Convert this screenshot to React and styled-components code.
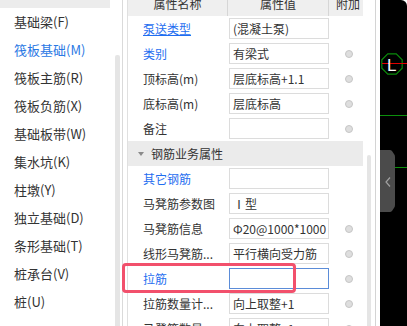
import React from 'react';
import styled, { createGlobalStyle } from 'styled-components';

const Global = createGlobalStyle`
  html, body { margin: 0; padding: 0; background: #fff; }
  body { font-family: "Noto Sans CJK SC", "Noto Sans", sans-serif; }
`;

const Root = styled.div`
  display: flex;
  width: 407px;
  height: 326px;
  overflow: hidden;
  background: #fff;
`;

/* ---------- left list ---------- */
const LeftPanel = styled.div`
  flex: none;
  width: 123px;
  box-sizing: border-box;
  display: flex;
  padding-right: 2px;
  border-right: 1px solid #dadada;
`;
const List = styled.div`
  flex: 1;
  display: flex;
  flex-direction: column;
  min-width: 0;
`;
const ListTop = styled.div`
  height: 8px;
  margin-right: 5px;
  background: #ececec;
`;
const ListItem = styled.div`
  height: 28px;
  line-height: 28px;
  padding-left: 14px;
  font-size: 13px;
  white-space: nowrap;
  color: ${p => (p.$active ? '#2a78e4' : '#333')};
`;
const VScroll = styled.div`
  flex: none;
  width: ${p => p.$w}px;
  display: flex;
  flex-direction: column;
  padding-top: ${p => p.$top}px;
  padding-left: ${p => p.$pl || 0}px;
  padding-right: ${p => p.$pr || 0}px;
  box-sizing: border-box;
`;
const Thumb = styled.div`
  flex: 1;
  background: #e5e5e5;
  border-radius: 2px 2px 0 0;
`;

/* ---------- property panel ---------- */
const PropPanel = styled.div`
  flex: none;
  width: 249px;
  box-sizing: border-box;
  margin-left: 4px;
  display: flex;
  border-left: 1px solid #e0e0e0;
  border-right: 1px solid #d4d4d4;
`;
const Table = styled.div`
  flex: none;
  width: 235px;
  display: flex;
  flex-direction: column;
`;
const cols = '100px 101px 34px';
const Header = styled.div`
  display: grid;
  grid-template-columns: ${cols};
  height: 16px;
  background: #efefef;
  flex: none;
`;
const HeadCell = styled.div`
  box-sizing: border-box;
  font-size: 12px;
  line-height: 8px;
  color: #333;
  text-align: center;
  padding-left: ${p => p.$pl || 0}px;
  border-right: ${p => (p.$last ? 'none' : '1px solid #d6d6d6')};
`;
const Row = styled.div`
  position: relative;
  display: grid;
  grid-template-columns: ${cols};
  height: 25px;
  align-items: center;
  flex: none;
`;
const NameCell = styled.div`
  padding-left: 15px;
  font-size: 12px;
  white-space: nowrap;
  overflow: hidden;
  color: ${p => (p.$link ? '#1f6ef0' : '#333')};
  text-decoration: ${p => (p.$underline ? 'underline' : 'none')};
`;
const ValueBox = styled.div`
  margin-left: 1px;
  height: 21px;
  box-sizing: border-box;
  border: 1px solid ${p => (p.$focus ? '#5b8cd8' : '#dcdcdc')};
  padding-left: 3px;
  font-size: 12px;
  line-height: 19px;
  color: #333;
  white-space: nowrap;
  overflow: hidden;
`;
const AttachCell = styled.div`
  display: flex;
  justify-content: center;
  padding-left: 6px;
`;
const Radio = styled.span`
  width: 8px;
  height: 8px;
  box-sizing: border-box;
  border-radius: 50%;
  background: #dedede;
  border: 1px solid #c6c6c6;
`;
const GroupRow = styled.div`
  height: 25px;
  flex: none;
  display: flex;
  align-items: center;
  gap: 7px;
  padding-left: 10px;
  background: #ebebeb;
  font-size: 12px;
  color: #333;
`;
const Caret = styled.span`
  width: 0;
  height: 0;
  border-left: 3px solid transparent;
  border-right: 3px solid transparent;
  border-top: 4px solid #8a8a8a;
`;
const Highlight = styled.div`
  position: absolute;
  left: -6px;
  top: -3px;
  width: 174px;
  height: 30px;
  box-sizing: border-box;
  border: 3px solid #f2506c;
  border-radius: 4px;
  pointer-events: none;
`;

/* ---------- canvas ---------- */
const Canvas = styled.div`
  flex: none;
  position: relative;
  width: 27px;
  margin-left: 4px;
  background: #000;
  border-top-right-radius: 6px;
  overflow: hidden;
`;
const Drawing = styled.svg`
  position: absolute;
  left: 0;
  top: 0;
`;
const Tab = styled.svg`
  position: absolute;
  left: 0;
  top: 150px;
`;

const listItems = [
  '基础梁(F)', '筏板基础(M)', '筏板主筋(R)', '筏板负筋(X)', '基础板带(W)',
  '集水坑(K)', '柱墩(Y)', '独立基础(D)', '条形基础(T)', '桩承台(V)', '桩(U)',
];

const rows1 = [
  { name: '泵送类型', value: '(混凝土泵)', link: true, underline: true, radio: false },
  { name: '类别', value: '有梁式', link: true, radio: true },
  { name: '顶标高(m)', value: '层底标高+1.1', radio: true },
  { name: '底标高(m)', value: '层底标高', radio: true },
  { name: '备注', value: '', radio: true },
];
const rows2 = [
  { name: '其它钢筋', value: '', link: true, radio: false },
  { name: '马凳筋参数图', value: 'Ⅰ型', radio: false },
  { name: '马凳筋信息', value: 'Φ20@1000*1000', radio: true },
  { name: '线形马凳筋...', value: '平行横向受力筋', radio: true },
  { name: '拉筋', value: '', link: true, radio: true, focus: true, highlight: true },
  { name: '拉筋数量计...', value: '向上取整+1', radio: true },
  { name: '马凳筋数量', value: '向上取整+1', radio: true },
];

function PropRow({ r }) {
  return (
    <Row>
      <NameCell $link={r.link} $underline={r.underline}>{r.name}</NameCell>
      <ValueBox $focus={r.focus}>{r.value}</ValueBox>
      <AttachCell>{r.radio && <Radio />}</AttachCell>
      {r.highlight && <Highlight />}
    </Row>
  );
}

export default function App() {
  return (
    <>
      <Global />
      <Root>
        <LeftPanel>
          <List>
            <ListTop />
            {listItems.map((t, i) => (
              <ListItem key={t} $active={i === 1}>{t}</ListItem>
            ))}
          </List>
          <VScroll $w={5} $top={55}><Thumb /></VScroll>
        </LeftPanel>

        <PropPanel>
          <Table>
            <Header>
              <HeadCell>属性名称</HeadCell>
              <HeadCell>属性值</HeadCell>
              <HeadCell $last $pl={4}>附加</HeadCell>
            </Header>
            {rows1.map(r => <PropRow key={r.name} r={r} />)}
            <GroupRow><Caret />钢筋业务属性</GroupRow>
            {rows2.map(r => <PropRow key={r.name} r={r} />)}
          </Table>
          <VScroll $w={12} $top={155} $pl={4} $pr={4}><Thumb /></VScroll>
        </PropPanel>

        <Canvas>
          <Drawing width="27" height="326" viewBox="0 0 27 326">
            <line x1="0" y1="115.5" x2="27" y2="115.5" stroke="#0c8f0c" strokeWidth="1" />
            <line x1="0" y1="167.5" x2="27" y2="167.5" stroke="#0c8f0c" strokeWidth="1" />
            <polygon
              points="22.16,68.21 16.21,74.16 7.79,74.16 1.84,68.21 1.84,59.79 7.79,53.84 16.21,53.84 22.16,59.79"
              fill="none" stroke="#0a8a0a" strokeWidth="1.2"
            />
            <line x1="2" y1="63.5" x2="27" y2="63.5" stroke="#e00000" strokeWidth="1.2" />
            <text x="7" y="71" fill="#fff" fontSize="17" fontFamily="Liberation Sans, sans-serif">L</text>
          </Drawing>
          <Tab width="15" height="62" viewBox="0 0 15 62">
            <path d="M0,0 H10 Q11,0 12,1 L14,4 Q15,5 15,7 V55 Q15,57 14,58 L12,61 Q11,62 10,62 H0 Z" fill="#4b4b4b" />
            <polyline points="10,27.5 6,32 10,36.5" fill="none" stroke="#a0a0a0" strokeWidth="1.2" />
          </Tab>
        </Canvas>
      </Root>
    </>
  );
}
